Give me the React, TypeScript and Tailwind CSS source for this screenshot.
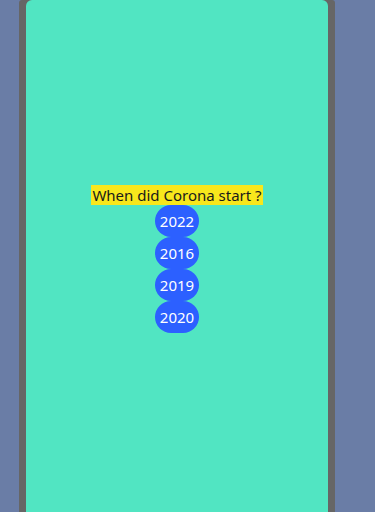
import React from "react";

export default function App() {
  const years = ["2022", "2016", "2019", "2020"];
  return (
    <div className="w-[375px] h-[512px] bg-[#6a7da6] overflow-hidden" style={{ fontFamily: '"Noto Sans", sans-serif' }}>
      <div className="ml-[19px] w-[316px] h-full bg-[#666666] px-[7px] rounded-t-[3px]">
        <div className="h-full bg-[#51e5c2] rounded-t-[6px] flex flex-col items-center pt-[185px]">
          <span className="bg-[#f8e71c] text-[#1a1a1a] text-[15px] leading-[20px] px-[1px]">When did Corona start ?</span>
          {years.map((y) => (
            <button key={y} className="w-[44px] h-[32px] rounded-full bg-[#2c60ff] text-white text-[15px] leading-[20px] flex items-center justify-center">
              {y}
            </button>
          ))}
        </div>
      </div>
    </div>
  );
}
